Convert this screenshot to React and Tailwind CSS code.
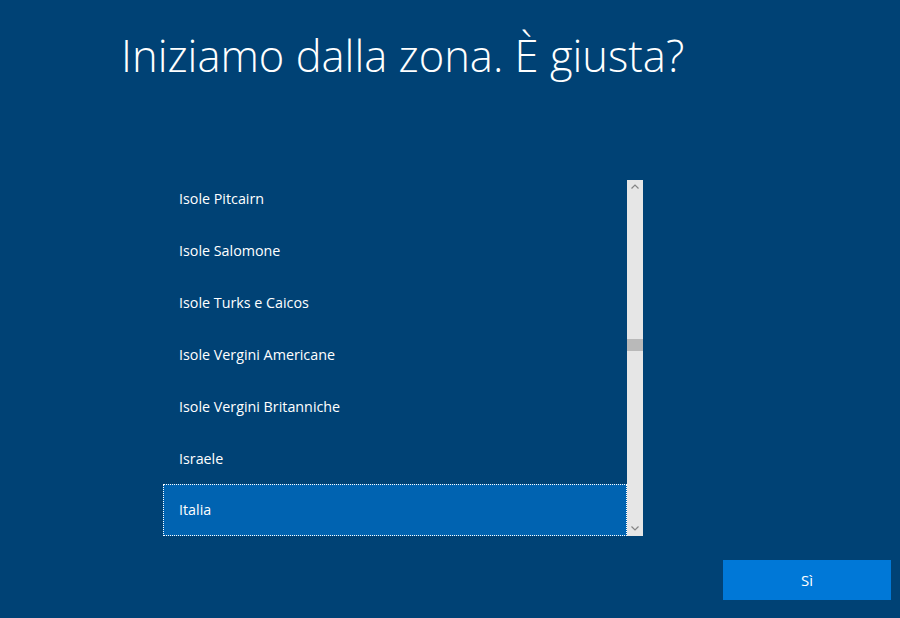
export default function App() {
  const items = [
    "Isole Pitcairn",
    "Isole Salomone",
    "Isole Turks e Caicos",
    "Isole Vergini Americane",
    "Isole Vergini Britanniche",
    "Israele",
    "Italia",
  ];
  return (
    <div
      className="w-[900px] h-[618px] bg-[#004275] overflow-hidden text-white"
      style={{ fontFamily: '"Open Sans", "Noto Sans", sans-serif' }}
    >
      <div className="pl-[121px] pt-[28px] h-[180px]">
        <h1 className="text-[43.5px] leading-[56px] font-light">
          Iniziamo dalla zona. È giusta?
        </h1>
      </div>
      <div className="ml-[163px] flex w-[480px] h-[356px]">
        <div className="w-[464px] h-full overflow-hidden">
          <div className="-mt-[7px] flex flex-col">
            {items.map((it, i) => {
              const sel = it === "Italia";
              return (
                <div
                  key={i}
                  className={
                    "h-[52px] flex items-center text-[14.3px] " +
                    (sel
                      ? "pl-[15px] -mt-[1px] bg-[#0063b1] border border-dotted border-white"
                      : "pl-[16px]")
                  }
                >
                  {it}
                </div>
              );
            })}
          </div>
        </div>
        <div className="w-[16px] h-full bg-[#e6e6e6] flex flex-col items-center">
          <svg width="16" height="12" viewBox="0 0 16 12" className="mt-[1px]">
            <path d="M4.5 7.5 L8 4 L11.5 7.5" stroke="#858585" strokeWidth="1.2" fill="none" />
          </svg>
          <div className="mt-[146px] w-full h-[12px] bg-[#b9b9b9]" />
          <div className="flex-1" />
          <svg width="16" height="12" viewBox="0 0 16 12" className="mb-[2px]">
            <path d="M4.5 4.5 L8 8 L11.5 4.5" stroke="#858585" strokeWidth="1.2" fill="none" />
          </svg>
        </div>
      </div>
      <div className="flex justify-end pr-[9px] mt-[24px]">
        <button className="w-[168px] h-[40px] bg-[#0078d7] text-[15px] flex items-center justify-center">
          Sì
        </button>
      </div>
    </div>
  );
}
